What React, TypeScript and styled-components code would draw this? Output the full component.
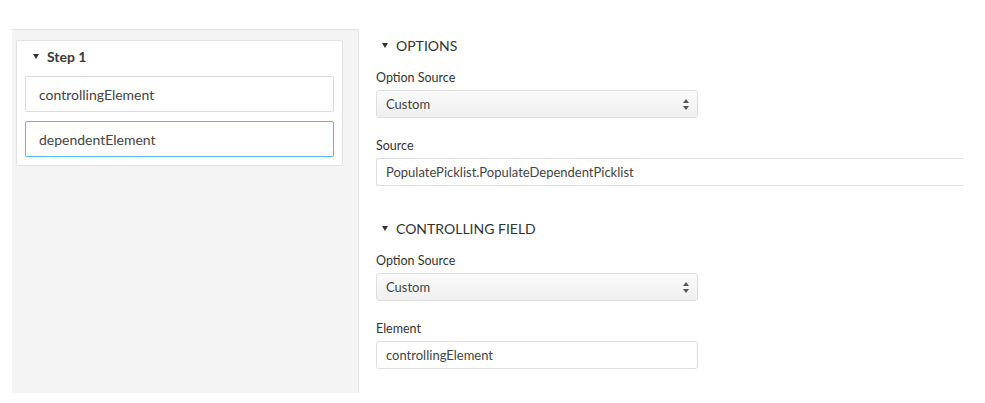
import React from 'react';
import styled, { createGlobalStyle } from 'styled-components';

const GlobalStyle = createGlobalStyle`
  body {
    margin: 0;
    background: #fff;
    font-family: Lato, "Open Sans", sans-serif;
    color: #333;
  }
`;

const Page = styled.div`
  display: flex;
  align-items: flex-start;
  padding: 29px 0 0 12px;
  height: 403px;
  box-sizing: border-box;
`;

const Sidebar = styled.div`
  width: 347px;
  height: 364px;
  box-sizing: border-box;
  background: #f4f4f4;
  border-top: 1px solid #e3e3e3;
  border-right: 1px solid #e6e6e6;
  padding: 10px 0 0 4px;
`;

const StepCard = styled.div`
  width: 327px;
  box-sizing: border-box;
  background: #fff;
  border: 1px solid #e2e2e2;
  border-radius: 2px;
  padding: 5px 8px 8px 8px;
  display: flex;
  flex-direction: column;
  gap: 9px;
`;

const StepTitle = styled.div`
  display: flex;
  align-items: center;
  gap: 8px;
  padding-left: 8px;
  height: 21px;
  font-size: 14px;
  font-weight: 700;
  color: #3a3a3a;
`;

const Caret = styled.span`
  width: 0;
  height: 0;
  border-left: 3.5px solid transparent;
  border-right: 3.5px solid transparent;
  border-top: 5px solid #333;
`;

const StepItem = styled.div<{ $active?: boolean }>`
  height: 36px;
  box-sizing: border-box;
  border: 1px solid ${p => (p.$active ? '#5bb7e5' : '#dcdcdc')};
  border-radius: 2px;
  display: flex;
  align-items: center;
  padding-left: 13px;
  font-size: 14px;
  color: #444;
`;

const Main = styled.div`
  flex: 1;
  padding: 7px 0 0 17px;
  display: flex;
  flex-direction: column;
`;

const Section = styled.div`
  display: flex;
  flex-direction: column;
  margin-bottom: 13px;
`;

const SectionTitle = styled.div`
  display: flex;
  align-items: center;
  gap: 8px;
  padding-left: 6px;
  height: 18px;
  font-size: 14px;
  color: #333;
  margin-bottom: 16px;
`;

const Label = styled.div`
  font-size: 12.5px;
  color: #333;
  height: 15px;
  line-height: 15px;
  margin-bottom: 5px;
`;

const Field = styled.div<{ $width: number; $clipped?: boolean }>`
  width: ${p => p.$width}px;
  height: 28px;
  box-sizing: border-box;
  border: 1px solid #dedede;
  border-right-color: ${p => (p.$clipped ? 'transparent' : '#dedede')};
  border-radius: ${p => (p.$clipped ? '3px 0 0 3px' : '3px')};
  display: flex;
  align-items: center;
  padding: 0 9px;
  font-size: 13px;
  color: #444;
  margin-bottom: 20px;
`;

const Select = styled(Field)`
  background: linear-gradient(#fbfbfb, #efefef);
  justify-content: space-between;
  padding: 0 8px 0 9px;
`;

const Arrows = () => (
  <svg width="6" height="11" viewBox="0 0 6 11">
    <path d="M3 0 L6 4 L0 4 Z" fill="#555" />
    <path d="M3 11 L6 7 L0 7 Z" fill="#555" />
  </svg>
);

export default function App() {
  return (
    <>
      <GlobalStyle />
      <Page>
        <Sidebar>
          <StepCard>
            <StepTitle>
              <Caret />
              Step 1
            </StepTitle>
            <StepItem>controllingElement</StepItem>
            <StepItem $active>dependentElement</StepItem>
          </StepCard>
        </Sidebar>
        <Main>
          <Section>
            <SectionTitle>
              <Caret />
              OPTIONS
            </SectionTitle>
            <Label>Option Source</Label>
            <Select $width={322}>
              Custom
              <Arrows />
            </Select>
            <Label>Source</Label>
            <Field $width={588} $clipped>
              PopulatePicklist.PopulateDependentPicklist
            </Field>
          </Section>
          <Section>
            <SectionTitle>
              <Caret />
              CONTROLLING FIELD
            </SectionTitle>
            <Label>Option Source</Label>
            <Select $width={322}>
              Custom
              <Arrows />
            </Select>
            <Label>Element</Label>
            <Field $width={322}>controllingElement</Field>
          </Section>
        </Main>
      </Page>
    </>
  );
}
